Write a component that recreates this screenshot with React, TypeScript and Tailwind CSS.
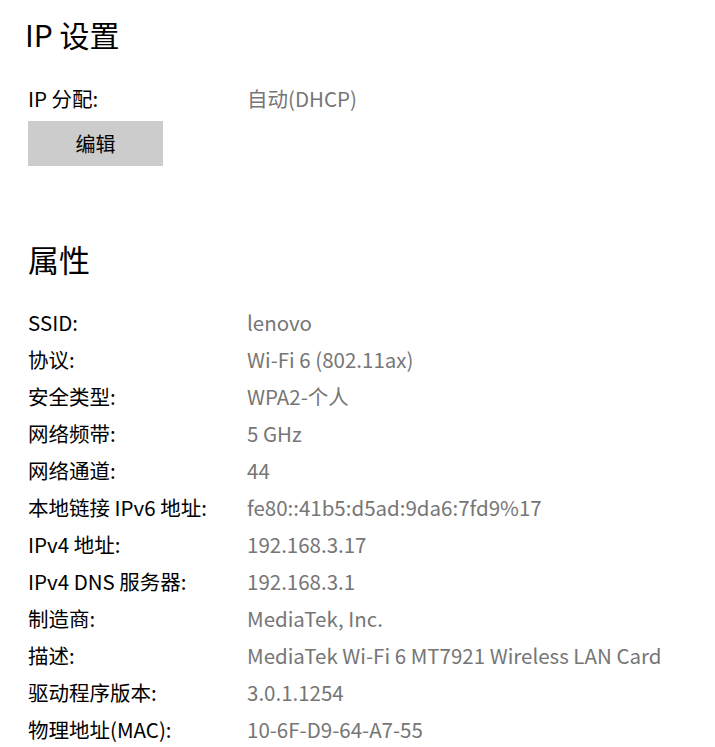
const font = { fontFamily: '"Noto Sans CJK SC", "Noto Sans", sans-serif' };

const props: [string, string][] = [
  ["SSID:", "lenovo"],
  ["协议:", "Wi-Fi 6 (802.11ax)"],
  ["安全类型:", "WPA2-个人"],
  ["网络频带:", "5 GHz"],
  ["网络通道:", "44"],
  ["本地链接 IPv6 地址:", "fe80::41b5:d5ad:9da6:7fd9%17"],
  ["IPv4 地址:", "192.168.3.17"],
  ["IPv4 DNS 服务器:", "192.168.3.1"],
  ["制造商:", "MediaTek, Inc."],
  ["描述:", "MediaTek Wi-Fi 6 MT7921 Wireless LAN Card"],
  ["驱动程序版本:", "3.0.1.1254"],
  ["物理地址(MAC):", "10-6F-D9-64-A7-55"],
];

export default function App() {
  return (
    <div className="h-[747px] w-[715px] overflow-hidden bg-white text-black" style={font}>
      <section className="pl-[25px]">
        <h2 className="flex h-[75px] items-center pb-[7px] text-[30px] font-normal leading-none">IP 设置</h2>
      </section>
      <div className="pl-[28px] pt-[5px]">
        <Row label="IP 分配:" value="自动(DHCP)" />
        <button className="mt-[4px] h-[45px] w-[135px] bg-[#cccccc] text-[20px] leading-none">编辑</button>
      </div>

      <h2 className="mt-[55px] flex h-[75px] items-center pl-[28px] text-[31px] font-normal leading-none">属性</h2>
      <div className="pl-[28px] pt-[8px]">
        {props.map(([label, value]) => (
          <Row key={label} label={label} value={value} />
        ))}
      </div>
    </div>
  );
}

function Row({ label, value }: { label: string; value: string }) {
  return (
    <div className="flex h-[37px] items-center text-[20.5px] leading-none">
      <span className="w-[219px] shrink-0">{label}</span>
      <span className="text-[#767676]">{value}</span>
    </div>
  );
}
